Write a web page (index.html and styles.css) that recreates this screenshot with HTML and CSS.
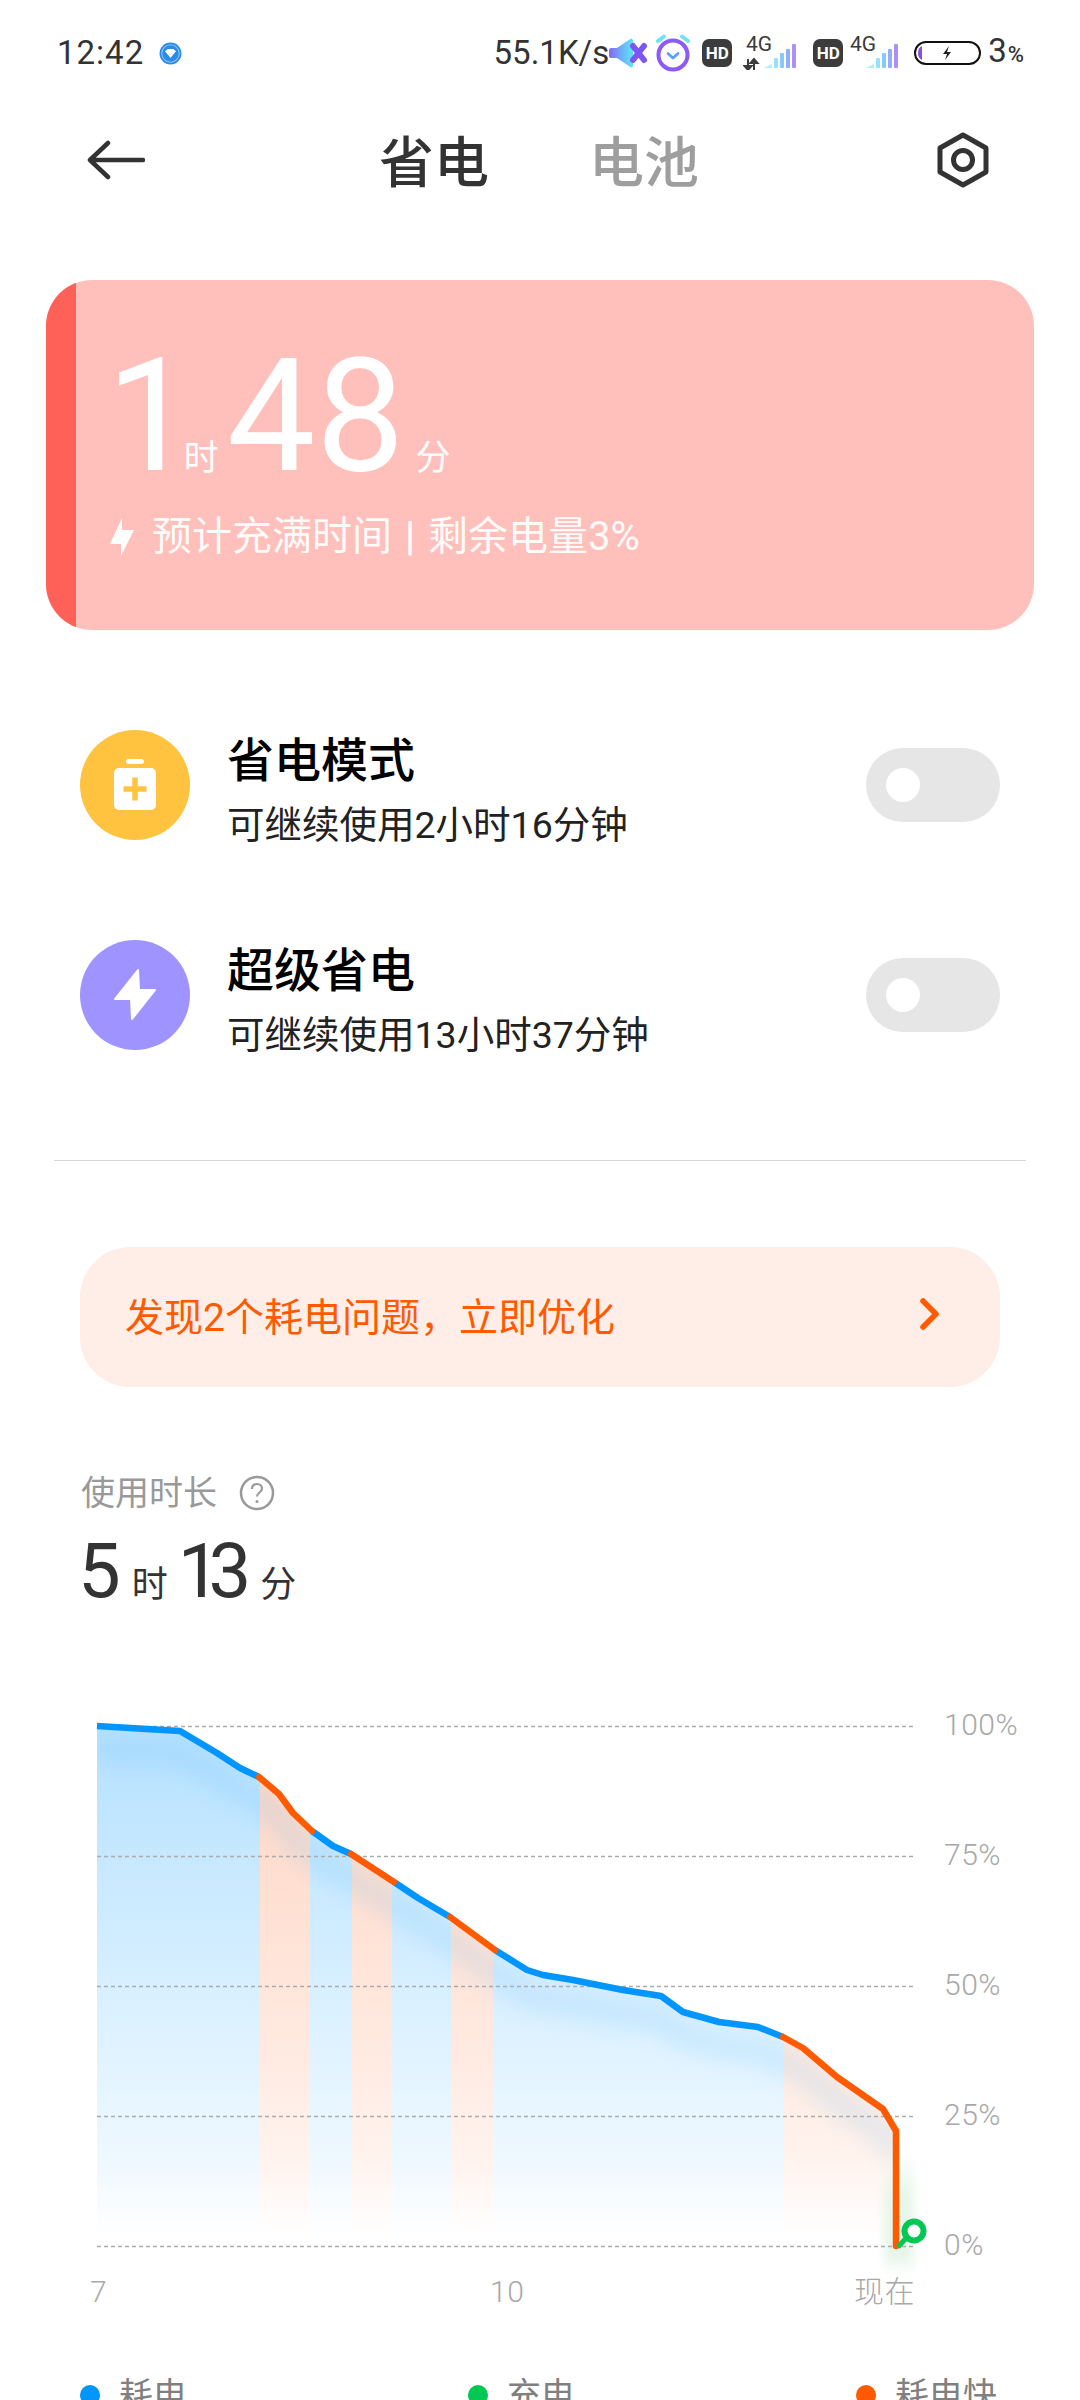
FILE: index.html
```html
<!DOCTYPE html>
<html lang="zh-CN">
<head>
<meta charset="utf-8">
<title>省电</title>
<link rel="stylesheet" href="styles.css">
</head>
<body>
<div class="page">
  <svg class="defs" width="0" height="0" aria-hidden="true">
    <defs>
      <linearGradient id="spk" x1="1" x2="0" y1="0" y2="0">
        <stop offset="0" stop-color="#5fe6f5"/>
        <stop offset=".55" stop-color="#6fa8f8"/>
        <stop offset="1" stop-color="#8a63f5"/>
      </linearGradient>
    </defs>
  </svg>

  <div class="status">
    <div class="status-left">
      <span class="clock">12:42</span>
      <svg class="badge" viewBox="0 0 21 21"><circle cx="10.5" cy="10.5" r="10" fill="#2a8be8"/><circle cx="10.5" cy="10.5" r="8" fill="none" stroke="#8fc6f5" stroke-width="1"/><path d="M5.5 8.5 8 6.5h5l2.500 2-5 6z" fill="#fff"/></svg>
    </div>
    <div class="status-right">
      <span class="speed">55.1K/s</span>
      <svg class="i-speaker" viewBox="0 0 38 30"><path d="M2 10h6L22 0.500c1 0 2 1 2 2v25c0 1-1 2-2 2L8 20H2c-1 0-2-1-2-2v-6c0-1 1-2 2-2z" fill="url(#spk)"/><path d="M24 8l11 14M35 8 24 22" stroke="#7d56f2" stroke-width="6" stroke-linecap="round"/></svg>
      <svg class="i-alarm" viewBox="0 0 34 38"><circle cx="17" cy="21" r="14.500" fill="none" stroke="#8a5cf5" stroke-width="4"/><path d="M12 19.500 17 24l5-4.500" fill="none" stroke="#5aa0f5" stroke-width="2.800" stroke-linecap="round" stroke-linejoin="round"/><path d="M2 7 8 2.500M32 7 26 2.500" stroke="#6fe3f5" stroke-width="4" stroke-linecap="round"/></svg>
      <span class="hd">HD</span>
      <svg class="i-net" viewBox="0 0 56 34"><text class="net-label" x="3" y="15">4G</text><path d="M5 23v11M5 34l-3.500-4h7zM11 34V23M11 23l-3.500 4h7z" stroke="#3c3c3c" stroke-width="2" fill="#3c3c3c"/><path d="M21 32l8-4v4z" fill="#a4f3ff"/><rect x="31" y="22" width="4" height="10" rx="1" fill="#94e2ff"/><rect x="37" y="17" width="4" height="15" rx="1" fill="#88c8ff"/><rect x="43" y="13" width="4" height="19" rx="1" fill="#90aefc"/><rect x="49" y="8" width="4" height="24" rx="1" fill="#ad90f6"/></svg>
      <span class="hd hd-second">HD</span>
      <svg class="i-net i-net-second" viewBox="0 0 52 34"><text class="net-label" x="1" y="15">4G</text><path d="M17 32l8-4v4z" fill="#a4f3ff"/><rect x="27" y="22" width="4" height="10" rx="1" fill="#94e2ff"/><rect x="33" y="17" width="4" height="15" rx="1" fill="#88c8ff"/><rect x="39" y="13" width="4" height="19" rx="1" fill="#90aefc"/><rect x="45" y="8" width="4" height="24" rx="1" fill="#ad90f6"/></svg>
      <svg class="i-battery" viewBox="0 0 67 24"><rect x="1" y="1" width="65" height="22" rx="11" fill="none" stroke="#111" stroke-width="2"/><path d="M8 5v14C5.500 18 4 15.500 4 12s1.500-6 4-7z" fill="#8a4fe0"/><path d="M35 5l-6 8h4l-2 6 6-8h-4z" fill="#222"/></svg>
      <span class="level">3<small>%</small></span>
    </div>
  </div>

  <header class="nav">
    <svg class="back" viewBox="0 0 58 40"><path d="M56 20H4M21 3 3 20l18 17" fill="none" stroke="#333" stroke-width="4.500" stroke-linecap="round" stroke-linejoin="round"/></svg>
    <div class="tabs">
      <span class="tab tab-on">省电</span>
      <span class="tab">电池</span>
    </div>
    <svg class="gear" viewBox="0 0 54 56"><path d="M27 3 50 16v24L27 53 4 40V16z" fill="none" stroke="#333" stroke-width="5" stroke-linejoin="round"/><circle cx="27" cy="28" r="9.500" fill="none" stroke="#333" stroke-width="5"/></svg>
  </header>

  <section class="card">
    <div class="card-bar"></div>
    <div class="card-body">
      <div class="remain">
        <span class="big big-one">1</span><span class="unit unit-h">时</span><span class="big">48</span><span class="unit unit-m">分</span>
      </div>
      <div class="hint">
        <svg class="hint-bolt" viewBox="0 0 24 38"><path d="M12 0 0 26h11v12L24 12H12z" fill="#fff"/></svg>
        <span>预计充满时间<span class="sep">|</span>剩余电量3%</span>
      </div>
    </div>
  </section>

  <section class="modes">
    <div class="mode">
      <svg class="mode-icon" viewBox="0 0 110 110"><circle cx="55" cy="55" r="55" fill="#ffc33f"/><rect x="46" y="29" width="18" height="5" rx="2.500" fill="#fff"/><rect x="34" y="38" width="42" height="42" rx="5" fill="#fff"/><path d="M43.500 59h23M55 47.500v23" stroke="#ffc33f" stroke-width="5.500"/></svg>
      <div class="mode-text">
        <div class="mode-title">省电模式</div>
        <div class="mode-sub">可继续使用2小时16分钟</div>
      </div>
      <div class="toggle"><span class="knob"></span></div>
    </div>
    <div class="mode">
      <svg class="mode-icon" viewBox="0 0 110 110"><circle cx="55" cy="55" r="55" fill="#9f94ff"/><path d="M58 30 35 59h16l1 20 23-29H59z" fill="#fff" stroke="#fff" stroke-width="2" stroke-linejoin="round"/></svg>
      <div class="mode-text">
        <div class="mode-title">超级省电</div>
        <div class="mode-sub">可继续使用13小时37分钟</div>
      </div>
      <div class="toggle"><span class="knob"></span></div>
    </div>
  </section>

  <hr class="rule">

  <div class="notice">
    <span>发现2个耗电问题，立即优化</span>
    <svg class="chev" viewBox="0 0 20 32"><path d="M3 3l13 13L3 29" fill="none" stroke="#ff5a00" stroke-width="5.500" stroke-linecap="round" stroke-linejoin="round"/></svg>
  </div>

  <div class="usage-label">
    <span>使用时长</span>
    <svg class="help" viewBox="0 0 36 36"><circle cx="18" cy="18" r="16" fill="none" stroke="#999" stroke-width="2.500"/><path d="M13 14c0-3 2-5 5-5s5 2 5 4.500c0 4-5 4-5 8" fill="none" stroke="#999" stroke-width="2.200"/><circle cx="18" cy="26.500" r="1.500" fill="#999"/></svg>
  </div>
  <div class="usage-time">
    <span class="num">5</span><span class="num-unit">时</span><span class="num num-next">13</span><span class="num-unit">分</span>
  </div>

  <svg class="chart" viewBox="0 1700 1080 640">
    <defs>
      <linearGradient id="blueFill" gradientUnits="userSpaceOnUse" x1="0" x2="0" y1="1730" y2="2235">
        <stop offset="0" stop-color="#b5e1ff"/>
        <stop offset=".35" stop-color="#cdebff"/>
        <stop offset=".68" stop-color="#e3f4ff"/>
        <stop offset=".85" stop-color="#eef8ff"/>
        <stop offset="1" stop-color="#fff"/>
      </linearGradient>
      <linearGradient id="hotFill" gradientUnits="userSpaceOnUse" x1="0" x2="0" y1="1780" y2="2235">
        <stop offset="0" stop-color="#fed9c8"/>
        <stop offset=".6" stop-color="#ffeae1"/>
        <stop offset=".85" stop-color="#fff4ef"/>
        <stop offset="1" stop-color="#fff"/>
      </linearGradient>
      <linearGradient id="greenFill" x1="0" x2="0" y1="0" y2="1">
        <stop offset="0" stop-color="#e6f6e8" stop-opacity="0"/>
        <stop offset=".4" stop-color="#e6f6e8"/>
        <stop offset=".85" stop-color="#e6f6e8"/>
        <stop offset="1" stop-color="#e6f6e8" stop-opacity="0"/>
      </linearGradient>
      <clipPath id="under">
        <path d="M97 1726 180 1731 217 1753 240 1768 259 1777 279 1794 293 1813 312 1831 333 1846 351 1854 394 1882 418 1898 450 1917 495 1950 527 1970 543 1975 573 1980 623 1990 661 1996 683 2012 719 2022 758 2027 783 2037 803 2048 837 2077 883 2109 896 2131V2246H97z"/>
      </clipPath>
      <filter id="soft" x="-10%" y="-20%" width="120%" height="140%"><feGaussianBlur stdDeviation="10"/></filter>
      <filter id="softer" x="-50%" y="-20%" width="200%" height="140%"><feGaussianBlur stdDeviation="5"/></filter>
    </defs>

    <g clip-path="url(#under)">
      <rect x="97" y="1720" width="800" height="530" fill="url(#blueFill)"/>
      <g fill="url(#hotFill)">
        <rect x="260" y="1720" width="50" height="530"/>
        <rect x="352" y="1720" width="40" height="530"/>
        <rect x="451" y="1720" width="42" height="530"/>
        <rect x="784" y="1720" width="113" height="530"/>
      </g>
      <path class="glow" d="M97 1726 180 1731 217 1753 240 1768 259 1777 279 1794 293 1813 312 1831 333 1846 351 1854 394 1882 418 1898 450 1917 495 1950 527 1970 543 1975 573 1980 623 1990 661 1996 683 2012 719 2022 758 2027 783 2037 803 2048 837 2077 883 2109 896 2131"/>
    </g>
    <rect x="884" y="2150" width="30" height="124" fill="url(#greenFill)" filter="url(#softer)"/>

    <g class="grid">
      <path d="M97 1726.500H914"/>
      <path d="M97 1856.500H914"/>
      <path d="M97 1986.500H914"/>
      <path d="M97 2116.500H914"/>
      <path d="M97 2246.500H914"/>
    </g>

    <path class="ln ln-use" d="M97 1726 180 1731 217 1753 240 1768 259 1777"/>
    <path class="ln ln-use" d="M312 1831 333 1846 351 1854"/>
    <path class="ln ln-use" d="M394 1882 418 1898 450 1917"/>
    <path class="ln ln-use" d="M495 1950 527 1970 543 1975 573 1980 623 1990 661 1996 683 2012 719 2022 758 2027 783 2037"/>
    <path class="ln ln-hot" d="M259 1777 279 1794 293 1813 312 1831"/>
    <path class="ln ln-hot" d="M351 1854 394 1882"/>
    <path class="ln ln-hot" d="M450 1917 495 1950"/>
    <path class="ln ln-hot" d="M783 2037 803 2048 837 2077 883 2109 896 2131V2246"/>
    <path d="M898 2247 908 2236" stroke="#00c853" stroke-width="5" fill="none"/>
    <circle cx="914" cy="2231" r="9.500" fill="#fff" stroke="#00c853" stroke-width="6"/>

    <g class="axis">
      <text x="944" y="1735">100%</text>
      <text x="944" y="1865">75%</text>
      <text x="944" y="1995">50%</text>
      <text x="944" y="2125">25%</text>
      <text x="944" y="2255">0%</text>
      <text x="90" y="2302">7</text>
      <text x="490" y="2302">10</text>
      <text x="854" y="2302">现在</text>
    </g>
  </svg>

  <div class="legend">
    <div class="legend-item"><span class="dot dot-use"></span>耗电</div>
    <div class="legend-item"><span class="dot dot-charge"></span>充电</div>
    <div class="legend-item"><span class="dot dot-hot"></span>耗电快</div>
  </div>
</div>
</body>
</html>
```
FILE: styles.css
```css
* { box-sizing: border-box; }
html, body { margin: 0; padding: 0; background: #fff; }
body { font-family: Roboto, "Noto Sans CJK SC", sans-serif; color: #333; }
.page { width: 1080px; height: 2400px; overflow: hidden; display: flex; flex-direction: column; }
.defs { position: absolute; }

/* status bar */
.status { height: 106px; padding: 0 56px 0 57px; display: flex; align-items: center; justify-content: space-between; flex: none; }
.status-left { display: flex; align-items: center; gap: 15px; }
.clock { font-size: 33px; letter-spacing: 1px; color: #333; line-height: 44px; }
.badge { width: 23px; height: 23px; }
.status-right { display: flex; align-items: center; }
.speed { font-size: 33px; color: #333; line-height: 44px; white-space: nowrap; }
.i-speaker { width: 38px; height: 30px; }
.i-alarm { width: 34px; height: 38px; margin-left: 9px; }
.hd { width: 30px; height: 28px; margin-left: 12px; background: #3c3c3c; border-radius: 7px; color: #fff; font-size: 17px; font-weight: 700; line-height: 28px; text-align: center; }
.hd-second { margin-left: 14px; }
.i-net { width: 56px; height: 34px; margin-left: 11px; }
.i-net-second { width: 52px; margin-left: 6px; }
.net-label { font-family: Roboto, sans-serif; font-size: 21px; fill: #3a3a3a; }
.i-battery { width: 67px; height: 24px; margin-left: 13px; }
.level { margin-left: 7px; font-size: 33px; color: #333; line-height: 40px; white-space: nowrap; }
.level small { font-size: 22px; font-weight: 500; margin-left: 1px; }

/* title row */
.nav { height: 108px; padding: 0 90px 0 87px; display: flex; align-items: center; justify-content: space-between; flex: none; }
.back { width: 58px; height: 40px; }
.tabs { display: flex; gap: 100px; margin-left: -3px; padding-top: 5px; }
.tab { font-size: 55px; line-height: 64px; font-weight: 500; color: #9e9e9e; }
.tab-on { color: #333; }
.gear { width: 54px; height: 56px; }

/* estimate card */
.card { margin: 66px 46px 0; height: 350px; flex: none; background: #ffc0bb; border-radius: 46px; overflow: hidden; display: flex; color: #fff; }
.card-bar { width: 30px; background: #ff6158; flex: none; }
.card-body { padding: 50px 0 0 30px; display: flex; flex-direction: column; }
.remain { display: flex; align-items: baseline; height: 172px; }
.big { font-size: 158px; line-height: 172px; }
.big-one { letter-spacing: -11px; }
.unit { font-size: 35px; line-height: 40px; }
.unit-h { margin-right: 8px; }
.unit-m { margin-left: 11px; }
.hint { display: flex; align-items: center; margin-top: 12px; padding-left: 4px; font-size: 40px; line-height: 46px; color: rgba(255,255,255,.95); }
.hint-bolt { width: 24px; height: 38px; margin-right: 18px; }
.sep { margin: 0 13px; font-weight: 700; }

/* power modes */
.modes { margin: 100px 80px 0; display: flex; flex-direction: column; gap: 100px; flex: none; }
.mode { height: 110px; display: flex; align-items: center; }
.mode-icon { width: 110px; height: 110px; flex: none; }
.mode-text { margin: 10px 0 0 37px; flex: 1; }
.mode-title { font-size: 47px; line-height: 56px; font-weight: 500; color: #000; }
.mode-sub { font-size: 37.500px; line-height: 46px; color: #222; margin-top: 13px; }
.toggle { width: 134px; height: 74px; border-radius: 37px; background: #e6e6e6; padding: 20px; flex: none; }
.knob { display: block; width: 34px; height: 34px; border-radius: 50%; background: #fff; }

.rule { margin: 110px 54px 0; border: 0; height: 1px; background: #d8d8d8; flex: none; }

/* notice banner */
.notice { margin: 86px 80px 0; height: 140px; flex: none; border-radius: 50px; background: #ffeee7; color: #ff5a00; font-size: 39px; padding: 0 60px 6px 45px; display: flex; align-items: center; justify-content: space-between; }
.chev { width: 20px; height: 32px; }

/* usage summary */
.usage-label { margin: 88px 0 0 81px; display: flex; align-items: center; gap: 22px; font-size: 34px; line-height: 36px; color: #999; flex: none; }
.help { width: 36px; height: 36px; }
.usage-time { margin: 15px 0 0 78px; display: flex; align-items: baseline; height: 90px; flex: none; }
.num { font-size: 76px; line-height: 90px; color: #333; }
.num-next { margin: 0 10px 0 10px; letter-spacing: -12px; }
.num-unit { font-size: 36px; color: #333; margin-left: 11px; }

/* battery chart */
.chart { width: 1080px; height: 640px; display: block; flex: none; margin-top: 84px; }
.grid path { stroke: #ababab; stroke-width: 1.500; stroke-dasharray: 4 3; fill: none; }
.glow { fill: none; stroke: #4fb4f5; stroke-width: 26; opacity: .14; transform: translateY(24px); filter: url(#soft); }
.ln { fill: none; stroke-width: 6.500; stroke-linejoin: round; stroke-linecap: butt; }
.ln-use { stroke: #0095ff; }
.ln-hot { stroke: #ff5a00; stroke-linecap: round; }
.axis text { font-family: Roboto, "Noto Sans CJK SC", sans-serif; font-size: 30px; font-weight: 300; letter-spacing: .5px; fill: #a8a8a8; }

/* legend, cut off by the bottom of the screen */
.legend { margin: 38px 0 0 80px; display: grid; grid-template-columns: 388px 388px auto; flex: none; }
.legend-item { display: flex; align-items: center; gap: 19px; font-size: 34px; line-height: 34px; color: #808080; }
.dot { width: 20px; height: 20px; border-radius: 50%; }
.dot-use { background: #0095ff; }
.dot-charge { background: #00c853; }
.dot-hot { background: #ff5a00; }
```
